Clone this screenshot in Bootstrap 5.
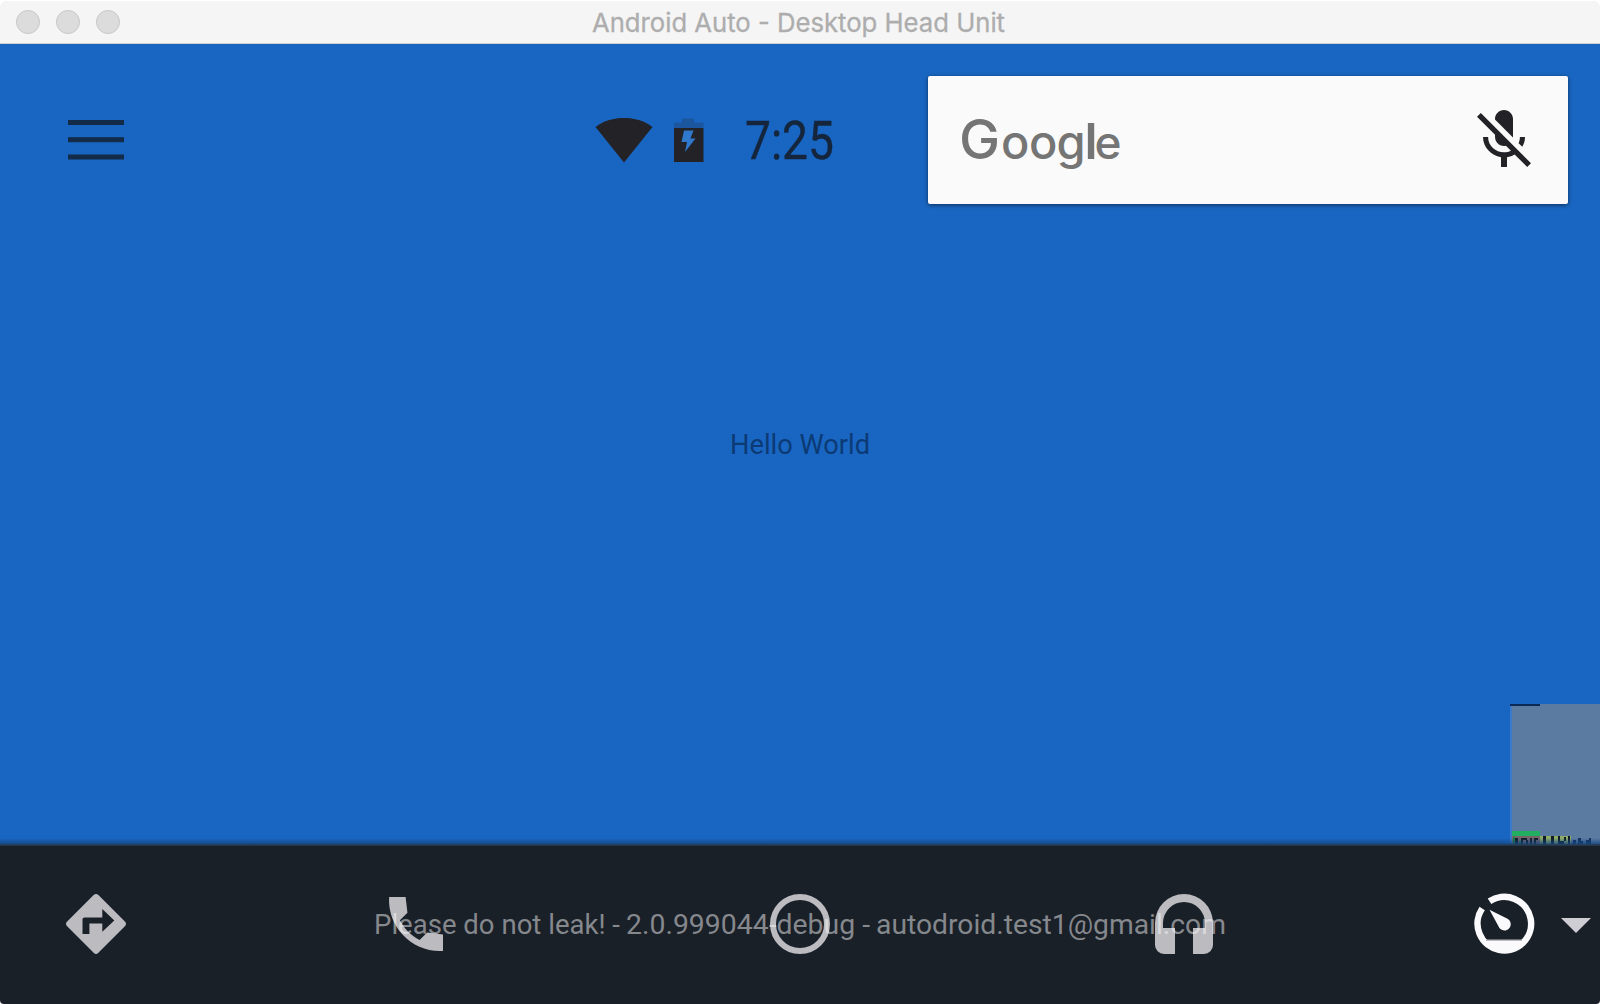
<!DOCTYPE html>
<html lang="en">
<head>
<meta charset="utf-8">
<title>Android Auto - Desktop Head Unit</title>
<meta name="viewport" content="width=device-width, initial-scale=1">
<link href="https://cdn.jsdelivr.net/npm/bootstrap@5.3.0/dist/css/bootstrap.min.css" rel="stylesheet">
<style>
  body { background: #fff; font-family: Roboto, "Liberation Sans", sans-serif; }
  svg { display: block; flex: none; }
  .window { width: 1600px; height: 1004px; border-radius: 8px 8px 4px 4px; }
  .titlebar { height: 44px; background: #f5f5f5; border-top: 1px solid #fff; border-bottom: 1px solid #cfcfcf; padding-left: 16px; }
  .light { width: 24px; height: 24px; background: #dcdcdc; border: 1px solid #c8c8c8; }
  .light + .light { margin-left: 16px; }
  .win-title { inset: 0; }
  .stage { height: 800px; background: #1966c2; }
  .topbar { padding: 32px 32px 0 64px; height: 160px; }
  .status { margin-left: auto; margin-right: 77px; }
  .search { width: 640px; height: 128px; background: #fafafa; border-radius: 2px; box-shadow: 0 1px 4px rgba(0,0,0,.55); padding: 0 28px 0 32px; }
  .hello { padding-top: 218px; }
  .bar-shadow { left: 0; right: 0; bottom: -2px; height: 8px; z-index: 1; background: linear-gradient(rgba(16,70,140,0), rgba(20,70,130,.7) 65%, #27405a 85%, #222f3d); }
  .perf { right: 0; bottom: 0; }
  .facets { height: 160px; background: #1a2028; color: #bbbbc0; }
  .facet-s { width: 192px; }
  .facet-m { width: 320px; }
  .facet-l { width: 448px; }
  .caret { right: 9px; top: 74px; }
  .notice { inset: 0; pointer-events: none; }
</style>
<script src="https://cdn.jsdelivr.net/npm/bootstrap@5.3.0/dist/js/bootstrap.bundle.min.js"></script>
</head>
<body class="overflow-hidden">
<div class="window overflow-hidden d-flex flex-column">
  <header class="titlebar position-relative d-flex align-items-center">
    <span class="light rounded-circle"></span><span class="light rounded-circle"></span><span class="light rounded-circle"></span>
    <div class="win-title position-absolute d-flex justify-content-center">
      <svg width="440" height="42"><text x="12" y="31" font-family="Inter, sans-serif" font-size="26" fill="#adadad" stroke="#adadad" stroke-width=".3" textLength="413" lengthAdjust="spacingAndGlyphs">Android Auto - Desktop Head Unit</text></svg>
    </div>
  </header>

  <main class="stage position-relative">
    <div class="topbar d-flex align-items-start">
      <svg width="64" height="128" aria-label="Menu"><g fill="#132b49"><rect x="4" y="44" width="56" height="5"/><rect x="4" y="61.200" width="56" height="5"/><rect x="4" y="78.500" width="56" height="5"/></g></svg>
      <div class="status d-flex">
        <svg width="60" height="128" aria-label="Wi-Fi"><path fill="#232226" d="M30 86.500 L1.500 51 C10 44.500 20 42 30 42 S50 44.500 58.500 51 Z"/></svg>
        <svg width="79" height="128" aria-label="Battery"><path fill="#1c569f" d="M28 42.500h12v4h9.500v6H20v-6h8z"/><path fill="#232226" d="M20 52h29.500v34H20z"/><path fill="#2f78cc" d="M30 54.500h9.500l-3 8h5L31 76l2-10H27.500z"/></svg>
        <svg width="118" height="128"><text x="12" y="82.500" font-size="53" fill="#14253c" stroke="#14253c" stroke-width=".4" textLength="89" lengthAdjust="spacingAndGlyphs">7:25</text></svg>
      </div>
      <div class="search d-flex align-items-center justify-content-between">
        <svg width="170" height="128"><text y="83" font-family="Inter, sans-serif" font-weight="500" fill="#757575"><tspan x="-1" font-size="55">G</tspan><tspan x="41" font-size="47">o</tspan><tspan x="69" font-size="47">o</tspan><tspan x="96.500" font-size="47">g</tspan><tspan x="124.500" font-size="50" font-weight="600">l</tspan><tspan x="134.500" font-size="46">e</tspan></text></svg>
        <svg width="72" height="72" viewBox="0 0 24 24" fill="#232226"><path d="M19 11h-1.700c0 .74-.16 1.430-.43 2.050l1.230 1.230c.56-.98.9-2.090.9-3.280zm-4.020.17c0-.06.02-.11.02-.17V5c0-1.660-1.340-3-3-3S9 3.340 9 5v.18l5.980 5.990zM4.270 3L3 4.270l6.010 6.010V11c0 1.660 1.330 3 2.990 3 .22 0 .44-.03.65-.08l1.660 1.660c-.71.33-1.500.52-2.310.52-2.760 0-5.300-2.100-5.300-5.100H5c0 3.410 2.720 6.230 6 6.720V21h2v-3.280c.91-.13 1.770-.45 2.540-.9L19.730 21 21 19.730 4.270 3z"/></svg>
      </div>
    </div>
    <div class="hello d-flex justify-content-center">
      <svg width="160" height="44"><text x="10" y="32" font-size="28" fill="#0c3a75" textLength="140" lengthAdjust="spacingAndGlyphs">Hello World</text></svg>
    </div>
    <svg class="perf position-absolute" width="90" height="140" shape-rendering="crispEdges">
      <rect width="90" height="140" fill="#5c7ba0"/><rect width="2" height="140" fill="#3b7acb"/>
      <rect width="30" height="2" fill="#0b2a55"/>
      <rect x="2" y="127" width="28" height="5" fill="#22ae60"/>
      <rect x="2" y="132" width="28" height="8" fill="#75666b"/>
      <rect x="30" y="132" width="31" height="8" fill="#8fac68"/>
      <path fill="#111b22" d="M5 134h3v6H5zM11 134h6v2h-4v4h-2zM16 136h2v4h-2zM20 134h2v6h-2zM24 134h4v2h-2v4h-2zM33 132h3v8h-3zM41 132h3v8h-3zM48 132h2v8h-2zM50 137h4v3h-4zM54 133h2v4h-2zM58 132h2v8h-2z"/>
      <path fill="#12305c" d="M63 136h3v4h-3zM68 134h3v6h-3zM71 137h2v3h-2zM76 136h3v4h-3zM79 134h2v6h-2z"/>
      <path fill="#15823f" d="M3 133h2v7H3zM9 137h2v3H9z"/>
    </svg>
    <div class="bar-shadow position-absolute"></div>
  </main>

  <nav class="facets position-relative d-flex align-items-center">
    <div class="facet-s d-flex justify-content-center">
      <svg width="72" height="72" viewBox="0 0 24 24" fill="currentColor"><path d="M21.710 11.290l-9-9c-.39-.39-1.020-.39-1.410 0l-9 9c-.39.39-.39 1.020 0 1.410l9 9c.39.39 1.020.39 1.410 0l9-9c.39-.38.39-1.010 0-1.410zM14.100 14.600V11.800H9.800V15.300H7.500V10.500c0-.4.3-.7.7-.7h5.900V7l4 3.800z"/></svg>
    </div>
    <div class="facet-l d-flex justify-content-center">
      <svg width="72" height="72" viewBox="0 0 24 24" fill="currentColor"><path d="M21 15.460l-5.270-.61-2.520 2.520c-2.830-1.440-5.150-3.750-6.590-6.590l2.530-2.530L8.540 3H3.030C2.450 13.180 10.820 21.550 21 20.970v-5.510z"/></svg>
    </div>
    <div class="facet-m d-flex justify-content-center">
      <svg width="72" height="72"><circle cx="36" cy="36" r="27" fill="none" stroke="currentColor" stroke-width="6"/></svg>
    </div>
    <div class="facet-l d-flex justify-content-center">
      <svg width="72" height="72" fill="currentColor"><path d="M7 35a29 29 0 0 1 58 0v22a9 9 0 0 1-9 9H45V40h12v-5a21 21 0 0 0-42 0v5h12v26H16a9 9 0 0 1-9-9z"/></svg>
    </div>
    <div class="facet-s d-flex justify-content-center">
      <svg width="72" height="72" fill="#fafafc"><path fill="none" stroke="#fafafc" stroke-width="6.500" d="M21.500 13.300A26.800 26.800 0 1 1 14.200 20.500"/><path d="M15 52h42a27 27 0 0 1-42 0z"/><path fill="#bbbbc0" d="M18 51.500h36v1.500H18z"/><path d="M21.500 21.800L38.500 30.200A6.300 6.300 0 1 1 30.600 38.500Z"/></svg>
    </div>
    <svg class="caret position-absolute" width="30" height="15" fill="#cdcdd3"><path d="M0 0h30L15 15z"/></svg>
    <div class="notice position-absolute d-flex justify-content-center">
      <svg width="880" height="160" font-size="28" fill="#fff" fill-opacity=".47"><text x="14" y="90" textLength="246" lengthAdjust="spacingAndGlyphs">Please do not leak! -</text><text x="266" y="90" textLength="244" lengthAdjust="spacingAndGlyphs">2.0.999044-debug -</text><text x="516" y="90" textLength="350" lengthAdjust="spacingAndGlyphs">autodroid.test1@gmail.com</text></svg>
    </div>
  </nav>
</div>
</body>
</html>
